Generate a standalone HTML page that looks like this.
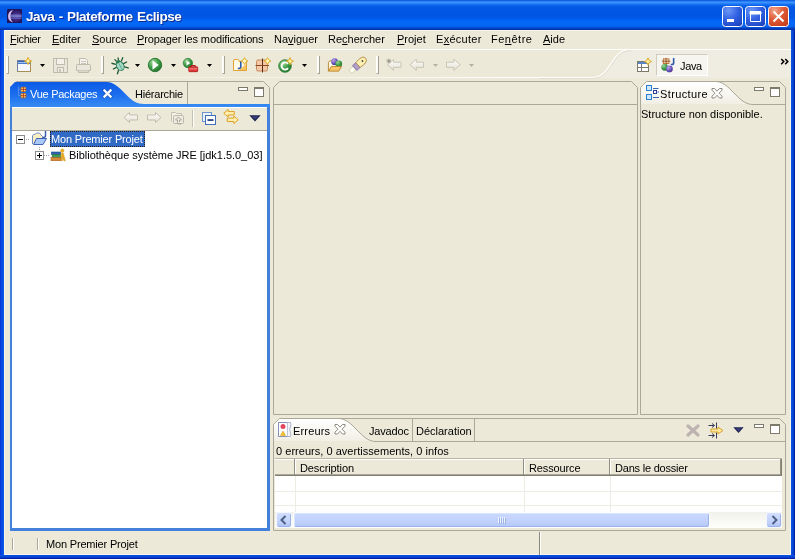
<!DOCTYPE html>
<html lang="fr">
<head>
<meta charset="utf-8">
<title>Java - Plateforme Eclipse</title>
<style>
*{box-sizing:border-box;margin:0;padding:0}
html,body{width:795px;height:559px;overflow:hidden;background:#ece9d8}
body{position:relative;font-family:"Liberation Sans","DejaVu Sans",sans-serif;font-size:11px;color:#000;line-height:13px}
.abs{position:absolute}
.t{position:absolute;white-space:nowrap;line-height:13px;height:13px;will-change:transform}
u{text-decoration:underline;text-underline-offset:1px}
/* window frame */
#titlebar{left:0;top:0;width:795px;height:30px;background:linear-gradient(to bottom,#0852d4 0px,#2a7ff6 1.500px,#3a93ff 2.500px,#2078f4 4px,#0a62ea 5.500px,#0259e6 7px,#0157e4 12px,#0156e2 17px,#005cee 19px,#0366f6 21px,#0467f6 25px,#0560ee 26.500px,#034fd6 27.500px,#023fbe 28.500px,#0130a2 30px)}
#title{top:9px;font-weight:bold;font-size:13.5px;word-spacing:1px;color:#fff;line-height:16px;height:16px;text-shadow:1px 1px 0 #0a2a8a}
#bl{left:0;top:30px;width:4px;height:529px;background:linear-gradient(to right,#0831d9 0,#0550e4 50%,#0a55e2 100%)}
#br{left:791px;top:30px;width:4px;height:529px;background:linear-gradient(to right,#0a55e2 0,#0440d0 60%,#00138c 100%)}
#bb{left:0;top:555px;width:795px;height:4px;background:linear-gradient(to bottom,#0a55e2 0,#0440d0 60%,#00138c 100%)}
/* menu */
#menubar{left:5px;top:30px;width:786px;height:19px;background:#ece9d8;border-top:1px solid #f6f4ea}
.m{top:33px}
/* toolbar */
#tbhl{left:4px;top:49px;width:787px;height:1px;background:#fff}
.sep{position:absolute;width:3px;height:18px;top:56px;border-left:1px solid #fff;border-right:1px solid #a5a293;border-bottom:1px solid #a5a293;background:#fbfaf3}
.dd{position:absolute;width:5px;height:3px;top:64px;background:#000;clip-path:polygon(0 0,100% 0,50% 100%)}
.dd.dis{background:#b5b2a2}

.ic{position:absolute;width:16px;height:16px;overflow:visible}
.hand{position:absolute;width:3px;height:18px;top:56px;border-left:1px solid #fff;border-right:1px solid #a5a293;border-bottom:1px solid #a5a293;background:#fbfaf3}
/* panels */
</style>
</head>
<body>
<!-- title bar -->
<div class="abs" id="titlebar"></div>
<div class="abs" id="bl"></div><div class="abs" id="br"></div><div class="abs" id="bb"></div>
<div class="t" id="title" style="left:26px;letter-spacing:-0.417px">Java - Plateforme Eclipse</div>
<svg class="abs" style="left:722px;top:6px" width="21" height="21" viewBox="0 0 21 21">
 <defs><radialGradient id="gwb" cx="0.3" cy="0.2" r="1"><stop offset="0" stop-color="#6c97f6"/><stop offset="0.5" stop-color="#2f5fe2"/><stop offset="1" stop-color="#1a3fb8"/></radialGradient>
 <radialGradient id="gwc" cx="0.3" cy="0.2" r="1"><stop offset="0" stop-color="#f2a48c"/><stop offset="0.45" stop-color="#e05a38"/><stop offset="1" stop-color="#c23a18"/></radialGradient></defs>
 <rect x="0.500" y="0.500" width="20" height="20" rx="3" fill="url(#gwb)" stroke="#fff"/>
 <rect x="5" y="13" width="7" height="3" fill="#fff"/>
</svg>
<svg class="abs" style="left:745px;top:6px" width="21" height="21" viewBox="0 0 21 21">
 <rect x="0.500" y="0.500" width="20" height="20" rx="3" fill="url(#gwb)" stroke="#fff"/>
 <path d="M5.500,6.500 H15.500 V15.500 H5.500 Z M5,6 H16 V8 H5 Z" fill="none" stroke="#fff"/><rect x="5" y="5" width="11" height="3" fill="#fff"/>
</svg>
<svg class="abs" style="left:768px;top:6px" width="21" height="21" viewBox="0 0 21 21">
 <rect x="0.500" y="0.500" width="20" height="20" rx="3" fill="url(#gwc)" stroke="#fff"/>
 <path d="M5.500,5.500 L15.500,15.500 M15.500,5.500 L5.500,15.500" stroke="#fff" stroke-width="2"/>
</svg>
<!-- app icon -->
<svg class="abs" style="left:6.500px;top:8.500px" width="15" height="14.500" viewBox="0 0 16 16" preserveAspectRatio="none">
 <defs><radialGradient id="gecl" cx="0.6" cy="0.5" r="0.6"><stop offset="0" stop-color="#5a3a9a"/><stop offset="1" stop-color="#23145e"/></radialGradient></defs>
 <rect x="0" y="0" width="16" height="16" rx="1.500" fill="#20145a"/>
 <circle cx="9" cy="8" r="6.800" fill="url(#gecl)"/>
 <path d="M6.500,1.200 A7,7 0 0 0 6.500,14.800 A9.500,9.500 0 0 1 6.500,1.200 Z" fill="#dcc0f2"/>
 <path d="M3.500,6.800 H15.500 M3.200,8.600 H15.500" stroke="#8fa8ee" stroke-width="0.900"/>
 <path d="M4,10.400 H15.500" stroke="#6a6ac0" stroke-width="0.800"/>
</svg>
<div class="abs" style="left:4px;top:30px;width:1px;height:525px;background:#f7f5ec"></div>
<div class="abs" style="left:790px;top:30px;width:1px;height:525px;background:#f7f5ec"></div>
<div class="abs" style="left:4px;top:554px;width:787px;height:1px;background:#f7f5ec"></div>
<!-- menu -->
<div class="abs" id="menubar"></div>
<div class="t m" id="m1" style="left:10px;letter-spacing:-0.333px"><u>F</u>ichier</div>
<div class="t m" id="m2" style="left:52px;letter-spacing:0px"><u>E</u>diter</div>
<div class="t m" id="m3" style="left:92px;letter-spacing:0px"><u>S</u>ource</div>
<div class="t m" id="m4" style="left:137px;letter-spacing:-0.12px"><u>P</u>ropager les modifications</div>
<div class="t m" id="m5" style="left:274px">Na<u>v</u>iguer</div>
<div class="t m" id="m6" style="left:328px;letter-spacing:0px">Re<u>c</u>hercher</div>
<div class="t m" id="m7" style="left:397px;letter-spacing:0px"><u>P</u>rojet</div>
<div class="t m" id="m8" style="left:436px;letter-spacing:0.286px">E<u>x</u>écuter</div>
<div class="t m" id="m9" style="left:491px;letter-spacing:0.5px">Fe<u>n</u>être</div>
<div class="t m" id="m10" style="left:543px;letter-spacing:0px"><u>A</u>ide</div>
<div class="abs" id="tbhl"></div>

<!-- MAIN TOOLBAR -->
<svg width="0" height="0" style="position:absolute"><defs>
 <radialGradient id="ggreen" cx="0.35" cy="0.3" r="0.8"><stop offset="0" stop-color="#9fd69a"/><stop offset="0.5" stop-color="#3f9e48"/><stop offset="1" stop-color="#1e6f2a"/></radialGradient>
 <radialGradient id="gpurple" cx="0.35" cy="0.3" r="0.8"><stop offset="0" stop-color="#b9a6e8"/><stop offset="0.6" stop-color="#6a50b8"/><stop offset="1" stop-color="#40308a"/></radialGradient>
 <linearGradient id="gfold" x1="0" y1="0" x2="0" y2="1"><stop offset="0" stop-color="#fff2b8"/><stop offset="1" stop-color="#f3c760"/></linearGradient>
 <linearGradient id="garr" x1="0" y1="0" x2="0" y2="1"><stop offset="0" stop-color="#ffffff"/><stop offset="1" stop-color="#e2dfd0"/></linearGradient>
</defs></svg>
<div class="hand" style="left:6px"></div>
<!-- new -->
<svg class="ic" style="left:16px;top:57px" viewBox="0 0 16 16">
 <rect x="1.500" y="3.500" width="13" height="11" fill="#fff" stroke="#a88f55"/>
 <path d="M1.500,14.500 L1.500,3.500 L14.500,3.500" fill="none" stroke="#6f7f9f"/>
 <rect x="2" y="4" width="12" height="1" fill="#2f62b8"/><rect x="2" y="5" width="12" height="1" fill="#9fc0ee"/><rect x="2" y="6" width="12" height="1" fill="#4a7ccc"/><rect x="2" y="7" width="12" height="7" fill="#f4f8fe"/>
 <path d="M12,0.3999999999999999 L13.1,2.9 L15.6,4 L13.1,5.1 L12,7.6 L10.9,5.1 L8.4,4 L10.9,2.9 Z" fill="#fff3a0" stroke="#d9a520" stroke-width="0.9"/>
</svg>
<div class="dd" style="left:40px"></div>
<!-- save (disabled) -->
<svg class="ic" style="left:53px;top:57px" viewBox="0 0 16 16">
 <rect x="0.500" y="1.500" width="14" height="14" fill="#e9e7db" stroke="#bfbcad"/>
 <rect x="3.500" y="1.500" width="8" height="6" fill="#f3f1ea" stroke="#bfbcad"/>
 <rect x="4.500" y="10.500" width="6" height="5" fill="#f0eee4" stroke="#bfbcad"/>
 <rect x="6" y="12" width="2" height="3" fill="#c9c6b8"/>
</svg>
<!-- print (disabled) -->
<svg class="ic" style="left:76px;top:57px" viewBox="0 0 16 16">
 <path d="M3.500,7.500 L3.500,1.500 L9.500,1.500 L11.500,3.500 L11.500,7.500" fill="#f5f4ee" stroke="#bfbcad"/>
 <path d="M5,4.500 H10 M5,6.500 H10" stroke="#c9c6b8"/>
 <path d="M0.500,8.500 Q0.500,7.500 1.500,7.500 L13.500,7.500 Q14.500,7.500 14.500,8.500 L14.500,13.500 L0.500,13.500 Z" fill="#e9e7dc" stroke="#bfbcad"/>
 <path d="M2.500,13.500 L2.500,15.500 L12.500,15.500 L12.500,13.500" fill="#dcd9cb" stroke="#bfbcad"/>
</svg>
<div class="sep" style="left:101px"></div>
<!-- debug -->
<svg class="ic" style="left:112px;top:57px" viewBox="0 0 16 16">
 <g transform="rotate(-28 8 8.500)">
 <path d="M1.500,2.500 L5,5.500 M14.500,2.500 L11,5.500 M0,8.500 L4.500,8.500 M16,8.500 L11.500,8.500 M1.500,15 L5,11.500 M14.500,15 L11,11.500 M6,0.500 L7,3.500 M10,0.500 L9,3.500" stroke="#1f5a34" stroke-width="1.300" fill="none"/>
 <ellipse cx="8" cy="9" rx="3.600" ry="4.800" fill="#a4d8c6" stroke="#2f7a58" stroke-width="1"/>
 <ellipse cx="8" cy="4.300" rx="2.200" ry="1.500" fill="#2f7a50"/>
 <path d="M8,6 L8,13.500" stroke="#5aa88c" stroke-width="0.800"/>
 </g>
</svg>
<div class="dd" style="left:135px"></div>
<!-- run -->
<svg class="ic" style="left:147px;top:57px" viewBox="0 0 16 16">
 <circle cx="8" cy="8" r="6.700" fill="url(#ggreen)" stroke="#26752f" stroke-width="0.900"/>
 <path d="M5.500,3.200 L11.700,8 L5.500,12.800 Z" fill="#fff"/>
</svg>
<div class="dd" style="left:171px"></div>
<!-- external tools -->
<svg class="ic" style="left:183px;top:57px" viewBox="0 0 18 16" width="18">
 <circle cx="5.500" cy="5.800" r="5.300" fill="url(#ggreen)" stroke="#2b7a35" stroke-width="0.7"/>
 <path d="M4,2.800 L8.200,5.800 L4,8.800 Z" fill="#fff"/>
 <path d="M9.500,10 L9.500,8.500 L13.500,8.500 L13.500,10" fill="none" stroke="#b01818" stroke-width="1.2"/>
 <rect x="6.500" y="10" width="10" height="5.500" rx="0.8" fill="#e23a3a" stroke="#a61414" stroke-width="0.9"/>
 <path d="M7,12.300 H16" stroke="#f7a0a0" stroke-width="0.9"/>
</svg>
<div class="dd" style="left:207px"></div>
<div class="sep" style="left:222px"></div>
<!-- new java project -->
<svg class="ic" style="left:232px;top:57px" viewBox="0 0 16 16">
 <path d="M1.500,13.500 L1.500,4 Q1.500,2.500 3,2.500 L5.500,2.500 Q7,2.500 7,4 L7,4.500 L14.500,4.500 L14.500,13.500 Z" fill="#fffbe6" stroke="#e0a232"/>
 <path d="M14,7 L14,13 L7,13 Z" fill="#f8c460"/>
 <path d="M8.800,4.500 L8.800,9.500 Q8.800,11.500 6.800,11.500 L5.800,11.500" fill="none" stroke="#2c5aa8" stroke-width="1.600"/>
 <path d="M12.5,0.6000000000000001 L13.7,2.8 L15.9,4 L13.7,5.2 L12.5,7.4 L11.3,5.2 L9.1,4 L11.3,2.8 Z" fill="#fff8c0" stroke="#dba520" stroke-width="0.9"/>
</svg>
<!-- new package -->
<svg class="ic" style="left:255px;top:57px" viewBox="0 0 16 16">
 <rect x="1.500" y="3" width="11" height="11" rx="1.500" fill="#f3c8a8" stroke="#c98a5a"/>
 <path d="M7.500,1.500 L7.500,15.500" stroke="#5a2c14" stroke-width="1"/><path d="M0.500,8.500 L14,8.500" stroke="#8a4a20" stroke-width="1"/>
 <path d="M12.5,0.6000000000000001 L13.7,2.8 L15.9,4 L13.7,5.2 L12.5,7.4 L11.3,5.2 L9.1,4 L11.3,2.8 Z" fill="#fff8c0" stroke="#dba520" stroke-width="0.9"/>
</svg>
<!-- new class -->
<svg class="ic" style="left:278px;top:57px" viewBox="0 0 16 16">
 <circle cx="7" cy="9" r="6.300" fill="url(#ggreen)" stroke="#2b7a35" stroke-width="0.8"/>
 <path d="M10,6.800 A3.600,3.600 0 1 0 10,11.200" fill="none" stroke="#fff" stroke-width="1.900"/>
 <path d="M12,0.6000000000000001 L13.1,3.1 L15.6,4.2 L13.1,5.300000000000001 L12,7.800000000000001 L10.9,5.300000000000001 L8.4,4.2 L10.9,3.1 Z" fill="#fff3a0" stroke="#d9a520" stroke-width="0.9"/>
</svg>
<div class="dd" style="left:302px"></div>
<div class="sep" style="left:317px"></div>
<!-- open type -->
<svg class="ic" style="left:327px;top:57px" viewBox="0 0 17 16" width="17">
 <path d="M1.500,14.500 L1.500,5.500 L3,3.500 L6.500,3.500 L7.500,5.500 L12.500,5.500 L12.500,8" fill="#fffbe8" stroke="#b8842a"/>
 <circle cx="8" cy="4.500" r="3.600" fill="url(#gpurple)"/>
 <circle cx="12.500" cy="6.800" r="3.600" fill="url(#ggreen)"/>
 <path d="M1.500,14.500 L4.500,9.500 L15.500,9.500 L12.500,14.500 Z" fill="#f9c566" stroke="#b8842a"/>
</svg>
<!-- search -->
<svg class="ic" style="left:350px;top:57px" viewBox="0 0 16 16">
 <g transform="rotate(-42 8 8)">
  <rect x="-2.300" y="5.800" width="6" height="4.400" rx="1.200" fill="#fffff2" stroke="#cdc8a8" stroke-width="0.800"/>
  <rect x="3.500" y="4.800" width="4.500" height="6.400" fill="#b29ecb" stroke="#7d6c9c" stroke-width="0.800"/>
  <path d="M8,4.800 L13.500,4.300 Q18.300,4.600 18.300,8 Q18.300,11.400 13.500,11.700 L8,11.200 Z" fill="#fdf0b4" stroke="#b8904a" stroke-width="0.900"/>
  <circle cx="14" cy="8" r="0.900" fill="#4a3a20"/>
 </g>
</svg>
<div class="sep" style="left:376px"></div>
<!-- last edit (disabled) -->
<svg class="ic" style="left:386px;top:57px" viewBox="0 0 16 16">
 <path d="M1.500,7.800 L7.500,2.500 L7.500,5.200 L15,5.200 L15,10.400 L7.500,10.400 L7.500,13.200 Z" fill="url(#garr)" stroke="#c9c6b6"/>
 <path d="M0.500,4 L5,4 M2.800,1.800 L2.800,6.200 M1.200,2.400 L4.400,5.600 M4.400,2.400 L1.200,5.600" stroke="#8f8c7e" stroke-width="0.800"/>
</svg>
<!-- back (disabled) -->
<svg class="ic" style="left:409px;top:57px" viewBox="0 0 16 16">
 <path d="M1,7.800 L7.300,2.200 L7.300,5.200 L14.500,5.200 L14.500,10.400 L7.300,10.400 L7.300,13.400 Z" fill="url(#garr)" stroke="#c9c6b6"/>
</svg>
<div class="dd dis" style="left:433px"></div>
<!-- forward (disabled) -->
<svg class="ic" style="left:445px;top:57px" viewBox="0 0 16 16">
 <path d="M15.200,7.800 L8.900,2.200 L8.900,5.200 L1.500,5.200 L1.500,10.400 L8.900,10.400 L8.900,13.400 Z" fill="url(#garr)" stroke="#c9c6b6"/>
</svg>
<div class="dd dis" style="left:469px"></div>

<!-- PERSPECTIVE BAR -->
<svg class="abs" style="left:540px;top:49px" width="251" height="32" viewBox="0 0 251 32">
 <path d="M52,28.500 C72,28.500 70,0.500 90,0.500 L251,0.500 L251,29 L52,29 Z" fill="#efede2"/>
 <path d="M0,28.500 L52,28.500 C72,28.500 70,0.500 90,0.500 L251,0.500" fill="none" stroke="#fff" stroke-width="1.200"/>
 <path d="M0,29.500 L52,29.500 C73,29.500 71,1.500 91,1.500" fill="none" stroke="#dcd8c8" stroke-width="0.800"/>
</svg>
<div class="abs" style="left:5px;top:77px;width:536px;height:1px;background:linear-gradient(to right,rgba(255,255,255,0.35) 0,rgba(255,255,255,0.45) 60%,rgba(255,255,255,0.95) 100%)"></div>
<!-- open perspective -->
<svg class="ic" style="left:636px;top:57px" viewBox="0 0 16 16">
 <rect x="1.500" y="4.500" width="11" height="10" fill="#fff" stroke="#7d7a6c"/>
 <rect x="2" y="5" width="10" height="2" fill="#5a84c8"/>
 <path d="M5.500,7 V14 M2,10.500 H12" stroke="#7d7a6c"/>
 <path d="M12,0.8999999999999999 L13.1,3.4 L15.6,4.5 L13.1,5.6 L12,8.1 L10.9,5.6 L8.4,4.5 L10.9,3.4 Z" fill="#fff3a0" stroke="#d9a520" stroke-width="0.9"/>
</svg>
<!-- java perspective button -->
<div class="abs" style="left:656px;top:54px;width:52px;height:22px;background:#f6f5ef;border:1px solid #d0cdbf;border-right-color:#fff;border-bottom-color:#fff"></div>
<svg class="ic" style="left:660px;top:57px" viewBox="0 0 17 16" width="17">
 <rect x="3.500" y="1.500" width="6" height="5" fill="#f2d4b0" stroke="#b8682c" stroke-width="0.9"/>
 <path d="M6.500,0.500 V8 M2,4 H11" stroke="#8a4a20" stroke-width="0.9"/>
 <path d="M14.500,0.500 L14.500,5.500 Q14.500,7.500 12.500,7.500 L11.500,7.500" fill="none" stroke="#2c5aa8" stroke-width="1.700"/>
 <circle cx="5" cy="10.500" r="3.600" fill="url(#ggreen)"/>
 <circle cx="10" cy="12.200" r="3.600" fill="url(#gpurple)"/>
</svg>
<!-- chevron -->
<svg class="abs" style="left:780px;top:58px" width="10" height="7" viewBox="0 0 10 7">
 <path d="M1.200,1 L3.800,3.600 L1.200,6.200 M5.200,1 L7.800,3.600 L5.200,6.200" fill="none" stroke="#000" stroke-width="1.500"/>
</svg>

<!-- LEFT PANEL : Vue Packages -->
<div class="abs" style="left:9.600px;top:104px;width:260.200px;height:426.500px;background:#4380dc"></div>
<svg class="abs" style="left:10px;top:81px" width="260" height="26" viewBox="0 0 260 26">
  <defs><linearGradient id="gblue" x1="0" y1="0" x2="0" y2="1"><stop offset="0" stop-color="#0c5ae6"/><stop offset="0.5" stop-color="#1b6eee"/><stop offset="1" stop-color="#3a8cf2"/></linearGradient></defs>
  <path d="M0.500,26 L0.500,6.500 L6.500,0.500 L253.500,0.500 L259.500,6.500 L259.500,26" fill="#ece9d8" stroke="#aca899"/>
  <path d="M0,26 L0,6 L5,1 L97,1 C102,1 106,4 110,7.5 L118,15.5 C122,19.5 127,23 134,23 L260,23 L260,26 Z" fill="url(#gblue)"/>
  <path d="M177.500,1 L177.500,23" stroke="#aca899"/>
</svg>
<!-- package explorer icon -->
<svg class="abs" style="left:17px;top:86px" width="10" height="13" viewBox="0 0 10 13">
 <path d="M1.500,0.500 V9.500 M1.500,3.500 H3.500 M1.500,9.500 H3.500" stroke="#6a98e0" stroke-width="0.700" fill="none"/>
 <rect x="4" y="1.200" width="4.800" height="4.300" rx="0.700" fill="#ffd77a" stroke="#c8701c" stroke-width="0.800"/>
 <path d="M6.400,1 V5.800 M3.800,3.400 H9" stroke="#a02810" stroke-width="0.800"/>
 <rect x="4" y="7.500" width="4.800" height="4.300" rx="0.700" fill="#ffd77a" stroke="#c8701c" stroke-width="0.800"/>
 <path d="M6.400,7.300 V12 M3.800,9.700 H9" stroke="#a02810" stroke-width="0.800"/>
</svg>
<!-- close X active -->
<svg class="abs" style="left:102px;top:88px" width="11" height="11" viewBox="0 0 11 11">
 <path d="M2.500,2.500 L8.500,8.500 M8.500,2.500 L2.500,8.500" stroke="#1846b0" stroke-width="3.800" stroke-linecap="square" opacity="0.500"/>
 <path d="M2.500,2.500 L8.500,8.500 M8.500,2.500 L2.500,8.500" stroke="#fff" stroke-width="2.300" stroke-linecap="square"/>
</svg>
<!-- min / max -->
<div class="abs" style="left:238px;top:87px;width:10px;height:4px;background:#fff;border:1px solid #7d7a6c"></div>
<div class="abs" style="left:254px;top:87px;width:10px;height:10px;background:#fff;border:1px solid #7d7a6c;border-top-width:2px"></div>
<div class="t" id="tvue" style="left:30px;top:88px;color:#fff;letter-spacing:-0.273px">Vue Packages</div>
<div class="t" id="thier" style="left:135px;top:88px;letter-spacing:-0.222px">Hiérarchie</div>
<div class="abs" style="left:12px;top:107px;width:255px;height:24px;background:#ece9d8;border-top:1px solid #fff;border-bottom:1px solid #a9a697"></div>
<div class="abs" style="left:12px;top:131px;width:255px;height:397px;background:#fff"></div>

<!-- view toolbar -->
<svg class="ic" style="left:123px;top:110px" viewBox="0 0 16 16">
 <path d="M1,7.500 L6.500,2.500 L6.500,5 L14.500,5 L14.500,10 L6.500,10 L6.500,12.500 Z" fill="url(#garr)" stroke="#c2bfae"/>
</svg>
<svg class="ic" style="left:146px;top:110px" viewBox="0 0 16 16">
 <path d="M15,7.500 L9.500,2.500 L9.500,5 L1.500,5 L1.500,10 L9.500,10 L9.500,12.500 Z" fill="url(#garr)" stroke="#c2bfae"/>
</svg>
<svg class="ic" style="left:170px;top:110px" viewBox="0 0 16 16">
 <path d="M1.500,11.500 L1.500,2.500 L5.500,2.500 L6.500,3.500 L11.500,3.500 L11.500,5" fill="#f3f1e8" stroke="#c2bfae"/>
 <rect x="3.500" y="5.500" width="10" height="8" rx="1" fill="#eeece2" stroke="#bcb9a8"/>
 <path d="M8.500,7 L5.500,10 L7.500,10 L7.500,12.500 Q7.500,14 9.500,14 L11,14 M8.500,7 L11.500,10 L9.500,10 L9.500,12" fill="none" stroke="#a9a697" stroke-width="1"/>
</svg>
<div class="abs" style="left:192px;top:110px;width:2px;height:17px;border-left:1px solid #c4c1b0;border-right:1px solid #fff"></div>
<!-- collapse all -->
<svg class="ic" style="left:201px;top:110px" viewBox="0 0 16 16">
 <rect x="1.500" y="2.500" width="9" height="9" fill="#eaf2fc" stroke="#6f94cc"/>
 <rect x="4.500" y="5.500" width="10" height="9" fill="#fff" stroke="#3e6fb8"/>
 <rect x="6.500" y="9.200" width="6" height="1.700" fill="#16387e"/>
</svg>
<!-- link with editor -->
<svg class="ic" style="left:223px;top:109px" viewBox="0 0 17 17" width="17" height="17">
 <path d="M0.800,4.500 L5.500,0.500 L5.500,2.700 L12,2.700 L12,6.300 L5.500,6.300 L5.500,8.500 Z" fill="#fff0b0" stroke="#dc9c1c" stroke-width="1"/>
 <path d="M16.200,11.500 L11.500,7.500 L11.500,9.700 L4.500,9.700 L4.500,13.300 L11.500,13.300 L11.500,15.500 Z" fill="#fff0b0" stroke="#dc9c1c" stroke-width="1"/>
</svg>
<!-- view menu -->
<svg class="abs" style="left:249px;top:115px" width="12" height="7" viewBox="0 0 12 7">
 <path d="M0.300,0.300 L11.700,0.300 L6,6.500 Z" fill="#1b2050"/>
 <path d="M2.500,1.200 L9.500,1.200 L6,4.800 Z" fill="#3a3f78"/>
</svg>

<!-- tree -->
<svg class="abs" style="left:16px;top:131px" width="52" height="32" viewBox="0 0 52 32" shape-rendering="crispEdges">
 <path d="M10,8.500 H14 M23.500,16 V20 M28,24.500 H33" stroke="#a0a0a0" stroke-dasharray="1 1"/>
 <rect x="0.500" y="4.500" width="8" height="8" fill="#fff" stroke="#8c8c8c"/>
 <rect x="2" y="8" width="5" height="1" fill="#000"/>
 <rect x="19.500" y="20.500" width="8" height="8" fill="#fff" stroke="#8c8c8c"/>
 <rect x="21" y="24" width="5" height="1" fill="#000"/><rect x="23" y="22" width="1" height="5" fill="#000"/>
</svg>
<!-- project icon -->
<svg class="ic" style="left:31px;top:131px" viewBox="0 0 16 16">
 <path d="M1.500,13 L1.500,4.500 L2.500,3.500 L4,3.500 Q5,1.500 7,2 Q9,1.500 9.500,3.500 L11.500,5.500 L11.500,7.500" fill="#fbeec0" stroke="#5f7fc4" stroke-width="0.9"/>
 <path d="M2.500,13.500 L5.500,7.500 L15.500,7.500 L12,13.500 Z" fill="#a9c9fb" stroke="#3f62b4" stroke-width="1"/>
 <path d="M14.500,0 L14.500,4.500 Q14.500,6.500 12.500,6.500 L11.500,6.500" fill="none" stroke="#3a5fb0" stroke-width="1.500"/>
</svg>
<!-- library icon -->
<svg class="ic" style="left:50px;top:147px" viewBox="0 0 16 16">
 <rect x="1.500" y="5" width="9" height="2.600" fill="#2f62b0" stroke="#1e4688" stroke-width="0.600"/>
 <rect x="2.200" y="7.600" width="8.300" height="2.900" fill="#3f9a58" stroke="#2a7040" stroke-width="0.600"/>
 <rect x="1" y="10.500" width="9.800" height="3.200" fill="#d98a3a" stroke="#a85e1c" stroke-width="0.600"/>
 <circle cx="12.300" cy="3.600" r="1.700" fill="#f0b020" stroke="#c88a10" stroke-width="0.500"/>
 <path d="M10.800,13.700 L11.600,6 L13.200,6 L15.300,13.700 L13.800,13.700 L12.600,9.500 L12.300,13.700 Z" fill="#f0b020" stroke="#c88a10" stroke-width="0.500"/>
</svg>

<div class="abs" style="left:50px;top:131px;width:95px;height:16px;background:#316ac5;outline:1px dotted #2a2418;outline-offset:-1px"></div>
<div class="t" id="tr1" style="left:51px;top:133px;color:#fff;letter-spacing:-0.176px">Mon Premier Projet</div>
<div class="t" id="tr2" style="left:69px;top:149px;letter-spacing:-0.027px">Bibliothèque système JRE [jdk1.5.0_03]</div>
<div class="t" id="pjava" style="left:680px;top:60px;letter-spacing:-0.333px">Java</div>

<!-- EDITOR AREA -->
<svg class="abs" style="left:273px;top:81px" width="365" height="334" viewBox="0 0 365 334">
  <path d="M0.5,333.5 L0.5,6.5 L6.5,0.5 L358.5,0.5 L364.5,6.5 L364.5,333.5 Z" fill="#ece9d8" stroke="#aca899"/>
  <path d="M1,23.5 L364,23.5" stroke="#aca899"/>
</svg>

<!-- STRUCTURE PANEL -->
<svg class="abs" style="left:640px;top:81px" width="146" height="334" viewBox="0 0 146 334">
  <defs><linearGradient id="gwhite" x1="0" y1="0" x2="0" y2="1"><stop offset="0" stop-color="#ffffff"/><stop offset="1" stop-color="#f1efe4"/></linearGradient></defs>
  <path d="M0.500,333.500 L0.500,6.500 L6.500,0.500 L139.500,0.500 L145.500,6.500 L145.500,333.500 Z" fill="#ece9d8" stroke="#aca899"/>
  <path d="M1,23 L1,6.500 L6.500,1 L76,1 C81,1 85,4 89,7.5 L97,15.5 C101,19.5 106,23 113,23 Z" fill="url(#gwhite)"/>
  <path d="M70,0.500 L76,0.5 C81,0.5 85,3.5 89,7.0 L97,15.0 C101,19.0 106,23.5 113,23.5 L145,23.500" fill="none" stroke="#aca899"/>
</svg>
<!-- outline icon -->
<svg class="abs" style="left:646px;top:85px" width="14" height="15" viewBox="0 0 14 15">
 <rect x="0.500" y="0.500" width="5" height="5" fill="#cfe6fb" stroke="#2f7fd0"/>
 <rect x="0.500" y="9.500" width="5" height="5" fill="#cfe6fb" stroke="#2f7fd0"/>
 <rect x="7.500" y="5.500" width="3" height="3" fill="#fff" stroke="#2b3f9a"/>
 <path d="M7,3.500 H12.500 M11.500,7 H13 M7,12.500 H13" stroke="#3a66b8"/>
</svg>
<!-- close X inactive -->
<svg class="abs" style="left:711px;top:88px" width="12" height="11" viewBox="0 0 12 11">
 <path d="M1,0.500 L3.500,0.500 L6,3.200 L8.500,0.500 L11,0.500 L11,2.200 L8,5.200 L11,8.200 L11,10 L8.500,10 L6,7.300 L3.500,10 L1,10 L1,8.200 L4,5.200 L1,2.200 Z" fill="#fff" stroke="#7f7d70" stroke-width="0.900"/>
</svg>
<div class="abs" style="left:754px;top:87px;width:10px;height:4px;background:#fff;border:1px solid #7d7a6c"></div>
<div class="abs" style="left:770px;top:87px;width:10px;height:10px;background:#fff;border:1px solid #7d7a6c;border-top-width:2px"></div>
<div class="t" id="tstruct" style="left:660px;top:88px;letter-spacing:0.375px">Structure</div>
<div class="t" id="snd" style="left:641px;top:108px;letter-spacing:0px">Structure non disponible.</div>

<!-- BOTTOM PANEL -->
<svg class="abs" style="left:273px;top:418px" width="513" height="113" viewBox="0 0 513 113">
  <path d="M0.500,112.500 L0.500,6.500 L6.500,0.500 L506.500,0.500 L512.500,6.500 L512.500,112.500 Z" fill="#ece9d8" stroke="#aca899"/>
  <path d="M1,23 L1,6.500 L6.500,1 L66,1 C71,1 75,4 79,7.5 L87,15.5 C91,19.5 96,23 103,23 Z" fill="url(#gwhite)"/>
  <path d="M60,0.500 L66,0.5 C71,0.5 75,3.5 79,7.0 L87,15.0 C91,19.0 96,23.5 103,23.5 L512,23.500" fill="none" stroke="#aca899"/>
  <path d="M139.500,1 L139.500,23 M201.500,1 L201.500,23" stroke="#aca899"/>
</svg>
<!-- problems icon -->
<svg class="abs" style="left:278px;top:422px" width="14" height="15" viewBox="0 0 14 15">
 <path d="M0.500,0.500 L9.500,0.500 L9.500,14.500 L0.500,14.500 Z" fill="#fff" stroke="#7886b0" stroke-width="0.900"/>
 <path d="M9.500,0.500 L12.500,0.500 Q13.500,3 12.300,5 Q11,7.500 12.300,10 Q13.300,12 12.500,14.500 L9.500,14.500" fill="#f4f5fa" stroke="#a3abc8" stroke-width="0.900"/>
 <circle cx="5" cy="4.600" r="2.500" fill="#e2465f"/>
 <path d="M5,9 L7.700,13.600 L2.300,13.600 Z" fill="#f2c030" stroke="#d8a018" stroke-width="0.500"/>
</svg>
<svg class="abs" style="left:334px;top:424px" width="12" height="11" viewBox="0 0 12 11">
 <path d="M1,0.500 L3.500,0.500 L6,3.200 L8.500,0.500 L11,0.500 L11,2.200 L8,5.200 L11,8.200 L11,10 L8.500,10 L6,7.300 L3.500,10 L1,10 L1,8.200 L4,5.200 L1,2.200 Z" fill="#fff" stroke="#7f7d70" stroke-width="0.900"/>
</svg>
<!-- delete (disabled) -->
<svg class="abs" style="left:686px;top:424px" width="14" height="13" viewBox="0 0 14 13">
 <path d="M2,2 L12,11 M12,2 L2,11" stroke="#bdb3b0" stroke-width="3.200" stroke-linecap="round"/>
</svg>
<!-- filters -->
<svg class="abs" style="left:708px;top:422px" width="16" height="17" viewBox="0 0 16 17">
 <path d="M0.500,3.500 H6 M4,1.500 L6.500,3.500 L4,5.500 M8.500,0.500 V6.500" fill="none" stroke="#3a3a58" stroke-width="1"/>
 <path d="M0.500,13.500 H6 M4,11.500 L6.500,13.500 L4,15.500 M8.500,10.500 V16.500" fill="none" stroke="#3a3a58" stroke-width="1"/>
 <path d="M3,7 L10,7 L10,5 L15,8.500 L10,12 L10,10 L3,10 Z" fill="#ffe9a0" stroke="#d99a1a" stroke-width="0.900"/>
</svg>
<svg class="abs" style="left:733px;top:427px" width="11" height="7" viewBox="0 0 11 7">
 <path d="M0.300,0.300 L10.700,0.300 L5.500,6 Z" fill="#1b2050"/>
 <path d="M2.500,1.200 L8.500,1.200 L5.500,4.500 Z" fill="#3a3f78"/>
</svg>
<div class="abs" style="left:754px;top:424px;width:10px;height:4px;background:#fff;border:1px solid #7d7a6c"></div>
<div class="abs" style="left:770px;top:424px;width:10px;height:10px;background:#fff;border:1px solid #7d7a6c;border-top-width:2px"></div>
<div class="t" id="terr" style="left:293px;top:425px;letter-spacing:0.167px">Erreurs</div>
<div class="t" id="tjdoc" style="left:369px;top:425px;letter-spacing:-0.167px">Javadoc</div>
<div class="t" id="tdecl" style="left:416px;top:425px">Déclaration</div>
<div class="t" id="zero" style="left:276px;top:445px;letter-spacing:0.029px">0 erreurs, 0 avertissements, 0 infos</div>
<!-- table -->
<div class="abs" style="left:275px;top:459px;width:507px;height:69px;background:#fff"></div>
<div class="abs" style="left:275px;top:459px;width:507px;height:17px;background:#ece9d8;border-top:1px solid #fff;border-bottom:1px solid #817f72;box-shadow:inset 0 -1px 0 #aca899"></div>
<svg class="abs" style="left:275px;top:459px" width="507" height="54" viewBox="0 0 507 54" shape-rendering="crispEdges">
 <path d="M19.500,0 V16 M248.500,0 V16 M334.500,0 V16 M505.500,0 V16" stroke="#918f80"/>
 <path d="M20.500,0 V15 M249.500,0 V15 M335.500,0 V15" stroke="#fff"/>
 <path d="M506.500,0 V16" stroke="#817f72"/>
 <path d="M0,32.500 H507 M0,46.500 H507 M20.500,17 V54 M249.500,17 V54 M335.500,17 V54" stroke="#eeede5"/>
</svg>
<div class="abs" style="left:275px;top:458px;width:507px;height:1px;background:#b9b6a6"></div>
<!-- h scrollbar -->
<div class="abs" style="left:275px;top:512px;width:507px;height:16px;background:linear-gradient(#f1f1ec,#fefefb)"></div>
<div class="abs" style="left:276px;top:512px;width:16px;height:16px;border-radius:3px;background:linear-gradient(#d2defd,#c1d1fb 70%,#adc0f2);border:1px solid #f4f7ff;box-shadow:inset -1px -1px 0 #9cb2e8"></div>
<div class="abs" style="left:766px;top:512px;width:16px;height:16px;border-radius:3px;background:linear-gradient(#d2defd,#c1d1fb 70%,#adc0f2);border:1px solid #f4f7ff;box-shadow:inset -1px -1px 0 #9cb2e8"></div>
<div class="abs" style="left:293px;top:512px;width:417px;height:16px;border-radius:3px;background:linear-gradient(#cbd9fe,#c0d1fc 60%,#b4c7f7);border:1px solid #fdfeff;box-shadow:inset -1px -1px 0 #9cb2e8,inset 1px 1px 0 #d8e3ff"></div>
<svg class="abs" style="left:276px;top:512px" width="506" height="16" viewBox="0 0 506 16">
 <path d="M9.500,4 L5.500,8 L9.500,12" fill="none" stroke="#4d6185" stroke-width="2"/>
 <path d="M496.500,4 L500.500,8 L496.500,12" fill="none" stroke="#4d6185" stroke-width="2"/>
 <path d="M222.500,5 V11 M224.500,5 V11 M226.500,5 V11 M228.500,5 V11" stroke="#eef3ff"/>
 <path d="M223.500,6 V12 M225.500,6 V12 M227.500,6 V12 M229.500,6 V12" stroke="#9db3e4"/>
</svg>

<div class="t" id="hdesc" style="left:300px;top:462px;letter-spacing:-0.1px">Description</div>
<div class="t" id="hres" style="left:529px;top:462px;letter-spacing:-0.125px">Ressource</div>
<div class="t" id="hdos" style="left:615px;top:462px;letter-spacing:-0.214px">Dans le dossier</div>

<!-- status -->
<div class="abs" style="left:12px;top:538px;width:2px;height:12px;border-left:1px solid #aca899;border-right:1px solid #fff"></div>
<div class="abs" style="left:37px;top:538px;width:2px;height:12px;border-left:1px solid #aca899;border-right:1px solid #fff"></div>
<div class="abs" style="left:539px;top:532px;width:2px;height:23px;border-left:1px solid #8a8878;border-right:1px solid #fff"></div>

<div class="t" id="status" style="left:46px;top:538px;letter-spacing:-0.176px">Mon Premier Projet</div>
</body>
</html>
